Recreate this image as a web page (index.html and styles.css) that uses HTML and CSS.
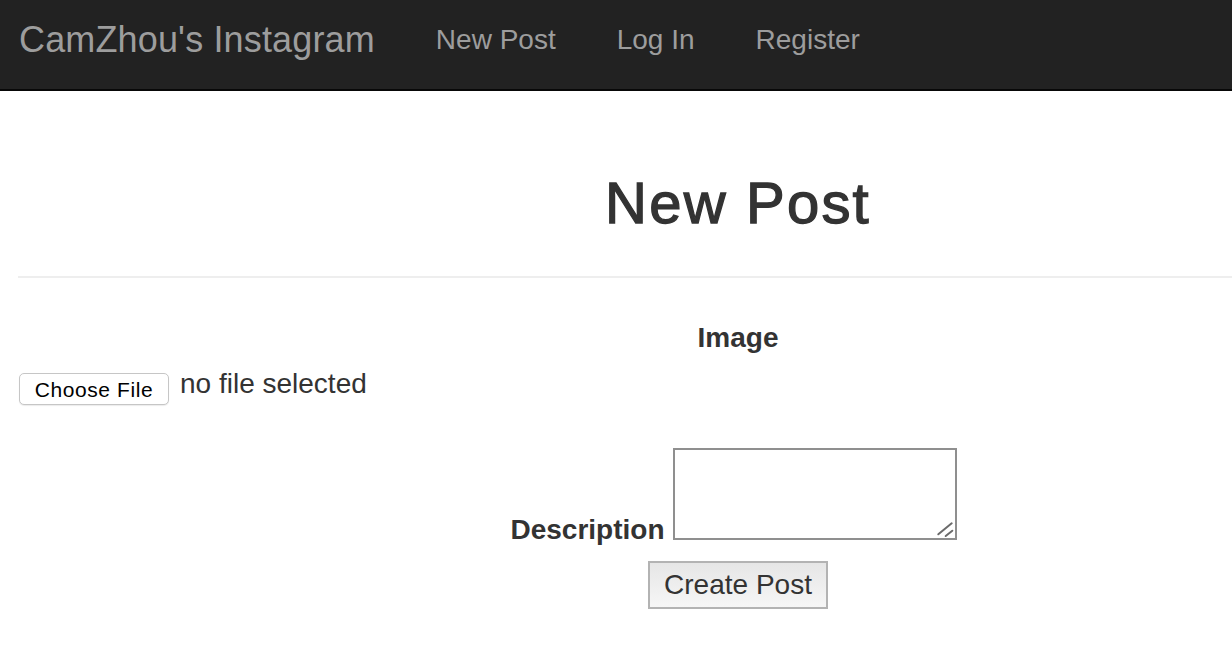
FILE: index.html
```html
<!DOCTYPE html>
<html lang="en">
<head>
<meta charset="utf-8">
<title>New Post - CamZhou's Instagram</title>
<link rel="stylesheet" href="styles.css">
</head>
<body>
<nav class="navbar">
  <a class="brand" href="#">CamZhou's Instagram</a>
  <ul class="nav-links">
    <li><a href="#">New Post</a></li>
    <li><a href="#">Log In</a></li>
    <li><a href="#">Register</a></li>
  </ul>
</nav>
<main class="page">
  <h1 class="title">New Post</h1>
  <hr class="divider">
  <form class="post-form">
    <label class="field-label">Image</label>
    <div class="file-row">
      <button type="button" class="file-btn">Choose File</button>
      <span class="file-name">no file selected</span>
    </div>
    <div class="desc-row">
      <label class="desc-label">Description</label>
      <span class="textarea-wrap">
        <textarea class="desc-input"></textarea>
        <svg class="grip" width="20" height="18" viewBox="0 0 20 18" aria-hidden="true">
          <line x1="3.3" y1="14.3" x2="16.7" y2="3.3" stroke="#6b6b6b" stroke-width="2" stroke-linecap="round"/>
          <line x1="10.7" y1="16" x2="17.3" y2="10.7" stroke="#6b6b6b" stroke-width="2" stroke-linecap="round"/>
        </svg>
      </span>
    </div>
    <div class="submit-row">
      <button type="button" class="submit-btn">Create Post</button>
    </div>
  </form>
</main>
</body>
</html>
```
FILE: styles.css
```css
html, body {
  margin: 0;
  padding: 0;
  overflow: hidden;
  background: #fff;
}
body {
  font-family: "Liberation Sans", Arial, sans-serif;
  color: #333;
  width: 1232px;
  height: 656px;
}
.navbar {
  display: flex;
  align-items: flex-start;
  height: 89px;
  background: #222;
  border-bottom: 2px solid #080808;
  padding-left: 19px;
}
.brand {
  font-size: 36px;
  line-height: 40px;
  padding-top: 20px;
  color: #9d9d9d;
  text-decoration: none;
  margin-right: 61px;
  letter-spacing: 0.15px;
}
.nav-links {
  display: flex;
  gap: 61px;
  list-style: none;
  margin: 0;
  padding: 0;
}
.nav-links a {
  display: block;
  font-size: 28px;
  line-height: 40px;
  padding-top: 20px;
  color: #9d9d9d;
  text-decoration: none;
}
.page {
  width: 1440px;
  margin-left: 18px;
  text-align: center;
}
.title {
  font-size: 58px;
  line-height: 64px;
  font-weight: normal;
  letter-spacing: 2.2px;
  -webkit-text-stroke: 1.3px #333;
  color: #333;
  margin: 80px 0 41px;
}
.divider {
  border: 0;
  border-top: 2px solid #eee;
  height: 0;
  margin: 0;
}
.post-form {
  display: block;
}
.field-label {
  display: block;
  font-size: 28px;
  line-height: 40px;
  font-weight: bold;
  margin: 40px 0 10px;
}
.file-row {
  display: flex;
  align-items: flex-start;
  height: 37px;
  margin-bottom: 43px;
  text-align: left;
}
.file-btn {
  margin: 5px 0 0 1px;
  width: 150px;
  height: 32px;
  padding: 1px 0 0;
  background: #fff;
  border: 1px solid #c6c6c6;
  border-radius: 5px;
  box-shadow: 0 1px 1px rgba(0, 0, 0, 0.08);
  font-family: "Liberation Sans", Arial, sans-serif;
  font-size: 21px;
  letter-spacing: 0.6px;
  line-height: 28px;
  color: #000;
}
.file-name {
  margin-left: 11px;
  font-size: 28px;
  line-height: 32px;
  color: #333;
}
.desc-row {
  display: flex;
  justify-content: center;
  align-items: flex-end;
  gap: 8px;
  padding-right: 9px;
}
.desc-label {
  font-size: 28px;
  line-height: 28px;
  font-weight: bold;
  margin-bottom: -4px;
}
.textarea-wrap {
  position: relative;
  display: block;
  width: 284px;
  height: 92px;
}
.desc-input {
  display: block;
  box-sizing: border-box;
  width: 284px;
  height: 92px;
  margin: 0;
  border: 2px solid #8f8f8f;
  padding: 2px;
  resize: none;
  font-family: "Liberation Sans", Arial, sans-serif;
  font-size: 16px;
  background: #fff;
}
.grip {
  position: absolute;
  left: 262px;
  top: 72px;
}
.submit-row {
  margin-top: 21px;
}
.submit-btn {
  display: inline-block;
  font-family: "Liberation Sans", Arial, sans-serif;
  font-size: 28px;
  line-height: 32px;
  color: #333;
  padding: 6px 14px 6px;
  border: 2px solid #b3b3b3;
  border-radius: 0;
  background: linear-gradient(#e6e6e6, #f6f6f6);
}
```
